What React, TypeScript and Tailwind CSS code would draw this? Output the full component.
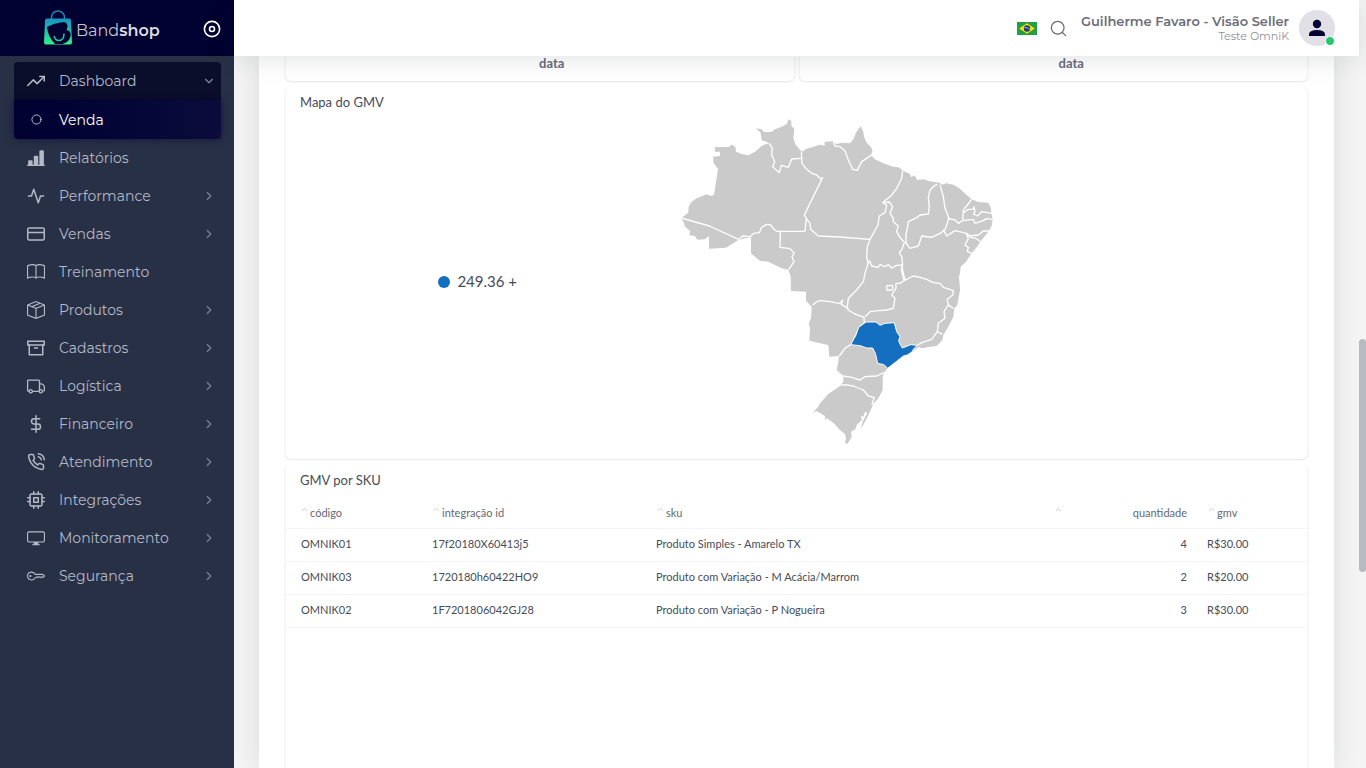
import React from 'react';
import { ChevronDown, ChevronRight, ChevronUp } from 'lucide-react';
import { FiActivity, FiArchive, FiCircle, FiCpu, FiCreditCard, FiDollarSign, FiPhoneCall, FiSearch, FiTrendingUp } from 'react-icons/fi';
import { BsBarChartLineFill, BsBook, BsBoxSeam, BsDisplay, BsKey } from 'react-icons/bs';

const TruckIcon: React.FC<{ className?: string }> = ({ className }) => (
  <svg viewBox="0 0 18 18" className={className} fill="none" stroke="currentColor" strokeWidth="1.300">
    <path d="M2 14.300h-.4q-1 0-1-1V4.200q0-1 1-1h9.900q1 0 1 1v10.100M5.500 14.300h6.500M12.500 6.800h1.500q3.400.3 3.400 4.500v2q0 1-1 1" />
    <circle cx="3.800" cy="14.300" r="1.600" />
    <circle cx="13.800" cy="14.300" r="1.600" />
  </svg>
);

const menu = [
  { label: 'Relatórios', icon: BsBarChartLineFill, children: false },
  { label: 'Performance', icon: FiActivity, children: true },
  { label: 'Vendas', icon: FiCreditCard, children: true },
  { label: 'Treinamento', icon: BsBook, children: false },
  { label: 'Produtos', icon: BsBoxSeam, children: true },
  { label: 'Cadastros', icon: FiArchive, children: true },
  { label: 'Logística', icon: TruckIcon, children: true },
  { label: 'Financeiro', icon: FiDollarSign, children: true },
  { label: 'Atendimento', icon: FiPhoneCall, children: true },
  { label: 'Integrações', icon: FiCpu, children: true },
  { label: 'Monitoramento', icon: BsDisplay, children: true },
  { label: 'Segurança', icon: BsKey, children: true },
];

const rows = [
  { code: 'OMNIK01', id: '17f20180X60413j5', sku: 'Produto Simples - Amarelo TX', qty: 4, gmv: 'R$30.00' },
  { code: 'OMNIK03', id: '1720180h60422HO9', sku: 'Produto com Variação - M Acácia/Marrom', qty: 2, gmv: 'R$20.00' },
  { code: 'OMNIK02', id: '1F7201806042GJ28', sku: 'Produto com Variação - P Nogueira', qty: 3, gmv: 'R$30.00' },
];

const country =
  'M34 324 55 308 56 290 65 275 80 265 110 253 122 258 132 255 144 176 130 158 130 140 150 138 150 125 135 125 135 111 175 111 186 104 196 110 198 125 215 132 235 136 255 125 275 108 288 102 298 100 285 94 275 90 272 68 258 55 275 58 282 66 305 66 315 58 335 50 350 42 356 28 364 32 364 48 373 56 370 85 376 103 388 118 396 125 410 116 430 110 450 104 464 107 464 96 487 94 492 98 500 102 515 98 540 100 550 88 558 68 572 48 580 65 582 80 590 98 602 110 608 122 602 135 615 148 640 160 670 170 685 172 702 184 720 192 724 202 733 196 742 210 760 208 780 214 810 218 815 224 830 220 850 224 870 236 890 255 905 268 925 276 955 278 962 292 964 310 968 328 965 348 955 365 935 390 920 412 905 430 888 455 872 470 870 490 867 500 870 540 862 585 853 595 850 620 835 650 820 675 817 690 800 708 770 712 760 715 745 712 725 725 710 735 680 752 653 775 642 788 638 800 638 840 625 865 610 882 602 900 588 930 572 958 578 935 592 908 585 905 580 920 572 918 576 930 560 945 556 958 543 965 545 982 532 1002 525 998 528 985 525 972 510 960 490 938 470 925 465 930 465 918 455 912 440 903 428 908 445 890 450 880 475 852 510 828 520 815 520 798 500 780 505 755 507 738 478 740 475 705 450 700 418 692 420 655 416 640 423 625 425 590 408 572 408 545 363 543 362 500 355 480 335 475 315 465 295 455 270 452 255 440 243 430 243 382 225 385 205 390 168 413 117 416 117 378 105 388 82 389 75 378 58 376 60 362 45 350 40 335Z';

const borders = [
  'M34 324 118 348 206 388',
  'M206 388 218 378 240 380 252 370 268 368 275 352 290 343 302 345 312 358 320 364 405 364',
  'M405 364 409 325 403 315 458 202 453 208 440 195 425 190 410 178 396 160 394 125',
  'M298 100 307 115 305 135 314 155 308 170 328 188 334 166 355 172 365 147 394 145',
  'M409 325 420 340 422 358 445 378 510 381 600 388',
  'M331 364 330 412 360 416 373 430 366 440 372 455 355 480',
  'M490 98 495 108 510 110 525 122 535 150 548 178 562 181 575 155 590 145 606 134',
  'M698 182 695 205 680 235 665 255 638 278',
  'M638 278 650 285 645 308 628 318 624 345 600 388 592 410 590 440 594 460 585 490 580 515 560 540 535 565 532 590 535 602',
  'M428 585 440 575 450 572 480 575 495 578 510 580 518 570 514 583 533 595',
  'M535 600 555 612 582 622 583 638 568 652 560 670 545 702 525 715 508 738',
  'M595 460 599 452 605 468 625 472 630 464 645 470 655 464 665 474 680 466 698 465',
  'M638 278 658 276 668 290 660 310 670 325 670 335 685 348 680 365 692 385 702 395',
  'M802 222 790 230 780 240 775 262 778 290 775 312 750 315 742 322 715 335 712 355 708 375 708 398',
  'M708 398 702 400 695 420 688 428 695 440 698 465 694 480 702 510',
  'M705 395 720 415 745 408 755 378 785 382 810 370 825 360',
  'M810 225 820 260 825 295 837 325 830 345 825 360',
  'M905 268 892 285 880 300 878 332',
  'M833 325 855 330 865 340 878 332 910 328 915 340 940 332 950 326 968 328',
  'M880 308 895 298 910 298 912 290 915 306 910 312 922 318 935 305 964 310',
  'M820 358 830 378 855 362 890 370 900 378 925 375 940 363 958 363',
  'M888 370 905 383 918 385 932 396',
  'M888 370 895 385 885 405 895 412 892 425 905 430',
  'M702 512 730 498 750 502 770 508 790 518 810 520 820 532 850 542 848 555 832 568 835 585 850 595',
  'M695 465 700 490 705 510 690 520 678 520 678 535 665 555 675 565 670 595 650 600 625 602 600 605 585 620',
  'M650 527H668V540H650Z',
  'M835 585 822 605 825 625 805 640 802 665 817 673',
  'M802 665 785 688 755 698 738 708',
  'M520 798 545 802 570 810 585 800 620 798 642 788',
  'M512 826 525 824 550 828 580 840 595 858 613 862 606 882 614 880',
];

const saoPaulo =
  'M588 636 618 636 630 646 645 640 673 638 680 665 690 680 686 692 690 702 697 714 722 704 742 706 730 718 727 725 712 735 700 738 680 754 653 775 642 764 623 760 616 730 608 714 590 714 570 707 542 704 558 675 566 652Z';

const BrazilMap = () => (
  <svg viewBox="0 0 1020 1035" className="w-[340px]" role="img" aria-label="Mapa do GMV">
    <path d={country} fill="#cacaca" />
    <g fill="none" stroke="#fff" strokeWidth="4" strokeLinejoin="round">
      {borders.map((d) => (
        <path key={d} d={d} />
      ))}
    </g>
    <path d={saoPaulo} fill="#146fc0" stroke="#fff" strokeWidth="3" />
  </svg>
);

const Logo = () => (
  <a href="#inicio" className="flex items-center gap-[3px]">
    <svg viewBox="0 0 30 36" className="h-9 w-[30px]" fill="none">
      <defs>
        <linearGradient id="bag" x1="0" y1="0" x2="0" y2="1">
          <stop offset="0" stopColor="#1793c4" />
          <stop offset="1" stopColor="#2ff08a" />
        </linearGradient>
      </defs>
      <path d="M8.500 9V7.500a6.500 6.500 0 0 1 13 0V9" stroke="#2c7fb0" strokeWidth="1.500" />
      <path d="M4 8.500h22q2 0 2 2l1 22q0 2-2 2H3q-2 0-2-2l1-22q0-2 2-2Z" fill="url(#bag)" />
      <path d="M4 17q7-4 17-5 4 1 3.500 5l-1 3q5 1 4 6-1 6-8 8H12Q5 27 4 17Z" fill="#000031" />
      <path d="M11 26q1 4.500 5 4.500 5 0 5-7" stroke="#22c7a0" strokeWidth="1.500" />
    </svg>
    <span className="pt-[6px] text-base leading-6 text-[#c3c4ce]">
      Band<span className="font-semibold text-[#dcdce2]">shop</span>
    </span>
  </a>
);

const Sidebar = () => (
  <aside className="flex w-[234px] shrink-0 flex-col bg-[#283046]">
    <div className="flex h-14 items-center justify-between bg-[#000031] pr-3 pl-[43px]">
      <Logo />
      <button type="button" aria-label="Recolher menu" className="text-white">
        <svg viewBox="0 0 20 20" className="size-5" fill="none" stroke="currentColor" strokeWidth="1.600">
          <circle cx="10" cy="11" r="7.600" />
          <circle cx="10" cy="11" r="2.500" />
        </svg>
      </button>
    </div>
    <nav className="pt-[6px] pr-[13px] pl-[14px] text-sm text-[#b4b9c7]">
      <a href="#dashboard" className="flex h-[38px] items-center gap-[14px] rounded-t bg-[#0b0e2a] px-[13px]">
        <FiTrendingUp className="size-[18px]" />
        <span className="flex-1">Dashboard</span>
        <ChevronDown className="-mr-2 size-[14px] opacity-70" />
      </a>
      <a
        href="#venda"
        className="flex h-[39px] items-center gap-[14px] rounded-b bg-linear-to-r from-[#000031] to-[#0b0c3c] px-[13px] text-white shadow-[0_0_8px_#00003199]"
      >
        <span className="flex w-[18px] justify-center">
          <FiCircle className="size-[11px] text-[#c5c8d4]" />
        </span>
        Venda
      </a>
      {menu.map(({ label, icon: Icon, children }) => (
        <a key={label} href={`#${label}`} className="flex h-[38px] items-center gap-[14px] px-[13px]">
          <Icon className="size-[18px]" />
          <span className="flex-1">{label}</span>
          {children && <ChevronRight className="-mr-2 size-[14px] opacity-60" />}
        </a>
      ))}
    </nav>
  </aside>
);

const Flag = () => (
  <svg viewBox="0 0 20 13" className="h-[13px] w-5" aria-hidden="true">
    <path d="M0 0h20v13H0z" fill="#229e45" />
    <path d="m10 1.300 7.800 5.200-7.800 5.200-7.800-5.200z" fill="#f8e509" />
    <circle cx="10" cy="6.500" r="3.200" fill="#1f3a80" />
    <path d="M7.300 5.600q3-.6 5.500 1.800" stroke="#fff" strokeWidth=".600" fill="none" />
  </svg>
);

const Header = () => (
  <header className="relative z-10 mr-[7px] flex h-14 shrink-0 items-center justify-end bg-white pr-6 shadow-[0_4px_24px_rgba(34,41,47,0.12)]">
    <button type="button" aria-label="Idioma" className="mr-3">
      <Flag />
    </button>
    <button type="button" aria-label="Buscar" className="mr-[13px] text-[#6e6b7b]">
      <FiSearch className="size-[19px]" strokeWidth={1.6} />
    </button>
    <div className="mr-[10px] text-right text-[#6e6b7b]">
      <p className="text-[13px] leading-4 font-semibold">Guilherme Favaro - Visão Seller</p>
      <p className="text-[11px] leading-[14px] text-[#908e99]">Teste OmniK</p>
    </div>
    <button type="button" aria-label="Perfil" className="relative size-9 rounded-full bg-[#e0e0e6]">
      <svg viewBox="0 0 36 36" className="size-9" fill="#000031">
        <circle cx="18" cy="14" r="4.200" />
        <path d="M10 26v-1.500q0-4.500 8-4.500t8 4.500V26z" />
      </svg>
      <span className="absolute right-0 bottom-0 size-[10px] rounded-full border border-white bg-[#28c76f]" />
    </button>
  </header>
);

interface SortLabelProps {
  children: string;
  className?: string;
}

const SortLabel: React.FC<SortLabelProps> = ({ children, className = '' }) => (
  <button type="button" className={`flex items-center gap-px pt-[2px] ${className}`}>
    <ChevronUp className="mb-[8px] size-[9px] text-[#b9bbbf]" />
    {children}
  </button>
);

const cardShadow = 'border-x border-[#f5f5f5] bg-white shadow-[0_1px_2px_rgba(0,0,0,0.10)]';

const App: React.FC = () => (
  <div className="flex h-screen overflow-hidden bg-[#f4f4f4] font-['Montserrat','Inter',sans-serif]">
    <Sidebar />
    <div className="flex min-w-0 flex-1 flex-col">
      <Header />
      <main className="flex min-h-0 flex-1 pr-8 pl-[25px]">
        <div className="flex min-w-0 flex-1 flex-col gap-[5px] bg-white px-[26px] font-['Lato',sans-serif] text-[#454c5a] shadow-[0_0_24px_rgba(34,41,47,0.12)]">
          <div className="grid shrink-0 grid-cols-2 gap-1 text-center text-[13px] leading-[15px] font-bold text-[#696b80]">
            <p className={`rounded-b-md pb-[10px] pl-6 ${cardShadow}`}>data</p>
            <p className={`rounded-b-md pb-[10px] pl-9 ${cardShadow}`}>data</p>
          </div>

          <section className={`flex h-[373px] shrink-0 flex-col rounded-md px-[14px] pt-2 ${cardShadow}`}>
            <h2 className="text-[13px] leading-4">Mapa do GMV</h2>
            <div className="flex flex-1 items-start">
              <div className="flex flex-1 items-center justify-end self-center pr-[153px] pb-[6px] text-[15px]">
                <span className="mr-[7px] size-3 rounded-full bg-[#146fc0]" />
                249.36 +
              </div>
              <div className="w-[623px] shrink-0">
                <BrazilMap />
              </div>
            </div>
          </section>

          <section className={`flex-1 rounded-t-md pt-2 ${cardShadow}`}>
            <h2 className="px-[14px] text-[13px] leading-4">GMV por SKU</h2>
            <table className="mt-[9px] w-full table-fixed text-left text-[11px]">
              <thead>
                <tr className="h-[31px] border-b border-[#f5f5f5] text-[#646974]">
                  <th className="w-[142px] pl-[14px] font-normal"><SortLabel>código</SortLabel></th>
                  <th className="w-[224px] pl-1 font-normal"><SortLabel>integração id</SortLabel></th>
                  <th className="pl-1 font-normal"><SortLabel>sku</SortLabel></th>
                  <th className="w-[133px] font-normal">
                    <SortLabel className="w-full justify-between">quantidade</SortLabel>
                  </th>
                  <th className="w-[120px] pl-5 font-normal"><SortLabel>gmv</SortLabel></th>
                </tr>
              </thead>
              <tbody>
                {rows.map((row) => (
                  <tr key={row.code} className="h-[33px] border-b border-[#f5f5f5]">
                    <td className="pl-[15px]">{row.code}</td>
                    <td className="pl-1">{row.id}</td>
                    <td className="pl-1">{row.sku}</td>
                    <td className="text-right">{row.qty}</td>
                    <td className="pl-5">{row.gmv}</td>
                  </tr>
                ))}
              </tbody>
            </table>
          </section>
        </div>
      </main>
    </div>
    <div className="absolute top-[339px] right-0 h-[233px] w-[7px] rounded-full bg-[#b8bac2]" />
  </div>
);

export default App;
